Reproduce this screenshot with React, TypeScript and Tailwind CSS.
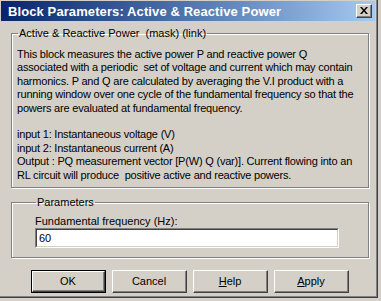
import React from "react";

const font = { fontFamily: '"Liberation Sans", Arial, sans-serif' };

function Btn({ children, def }: { children: React.ReactNode; def?: boolean }) {
  return (
    <div
      className={
        "w-[75px] h-[23px] flex " +
        (def ? "border border-black" : "")
      }
    >
      <div className="flex-1 flex border-t border-l border-t-white border-l-white border-r border-b border-r-[#404040] border-b-[#404040]">
        <div className="flex-1 flex items-center justify-center border-r border-b border-r-[#808080] border-b-[#808080] text-[11px] text-black">
          {children}
        </div>
      </div>
    </div>
  );
}

export default function App() {
  const lines1 = [
    "This block measures the active power P and reactive power Q",
    "associated with a periodic  set of voltage and current which may contain",
    "harmonics. P and Q are calculated by averaging the V.I product with a",
    "running window over one cycle of the fundamental frequency so that the",
    "powers are evaluated at fundamental frequency.",
    "\u00a0",
    "input 1: Instantaneous voltage (V)",
    "input 2: Instantaneous current (A)",
    "Output : PQ measurement vector [P(W) Q (var)]. Current flowing into an",
    "RL circuit will produce  positive active and reactive powers.",
  ];
  return (
    <div className="w-[381px] h-[301px] bg-[#d4d0c8] overflow-hidden" style={font}>
      <div className="w-[378px] h-[298px] flex flex-col border-r border-b border-r-[#404040] border-b-[#404040]">
        <div className="flex-1 flex flex-col border-r border-b border-r-[#808080] border-b-[#808080]">
          {/* title bar */}
          <div className="h-[20px] mx-[1px] mt-[1px] flex items-center justify-between pl-[7px] pr-[3px] bg-gradient-to-r from-[#0a246a] to-[#a6caf0]">
            <span className="text-white font-bold text-[13px] leading-none tracking-[0.1px]">
              Block Parameters: Active &amp; Reactive Power
            </span>
            <div className="w-[16px] h-[14px] bg-[#d4d0c8] flex border-t border-l border-t-white border-l-white border-r border-b border-r-[#404040] border-b-[#404040]">
              <div className="flex-1 flex items-center justify-center border-r border-b border-r-[#808080] border-b-[#808080]">
                <svg width="8" height="7" viewBox="0 0 8 7">
                  <path d="M0 0h2l2 2.5L6 0h2L5 3.5 8 7H6L4 4.5 2 7H0l3-3.5z" fill="#000" />
                </svg>
              </div>
            </div>
          </div>

          {/* group 1 */}
          <fieldset className="mt-[6px] ml-[11px] mr-[7px] h-[161px] border border-[#808080] shadow-[inset_1px_1px_0_#fff,1px_1px_0_#fff] px-[5px]">
            <legend className="ml-[1px] px-[1px] text-[11px] leading-[13px] text-black whitespace-pre">
              Active &amp; Reactive Power  (mask) (link)
            </legend>
            <div className="mt-[8px] text-[11px] leading-[13.4px] text-black whitespace-pre tracking-[-0.2px]">
              {lines1.map((l, i) => (
                <div key={i}>{l}</div>
              ))}
            </div>
          </fieldset>

          {/* group 2 */}
          <fieldset className="mt-[8px] ml-[11px] mr-[7px] h-[62px] border border-[#808080] shadow-[inset_1px_1px_0_#fff,1px_1px_0_#fff] pl-[23px] pr-[29px]">
            <legend className="ml-[1px] px-[1px] text-[11px] leading-[13px] text-black">
              Parameters
            </legend>
            <div className="text-[11px] leading-[13px] text-black mt-[6px]">
              Fundamental frequency (Hz):
            </div>
            <div className="mt-0 h-[20px] flex border-t border-l border-t-[#808080] border-l-[#808080] border-r border-b border-r-white border-b-white">
              <div className="flex-1 flex items-center bg-white pl-[2px] border-t border-l border-t-[#404040] border-l-[#404040] border-r border-b border-r-[#d4d0c8] border-b-[#d4d0c8] text-[11px] text-black">
                60
              </div>
            </div>
          </fieldset>

          {/* buttons */}
          <div className="mt-[12px] ml-[31px] flex gap-[6px]">
            <Btn def>OK</Btn>
            <Btn>Cancel</Btn>
            <Btn>
              <span>
                <span className="underline">H</span>elp
              </span>
            </Btn>
            <Btn>
              <span>
                <span className="underline">A</span>pply
              </span>
            </Btn>
          </div>
        </div>
      </div>
    </div>
  );
}
